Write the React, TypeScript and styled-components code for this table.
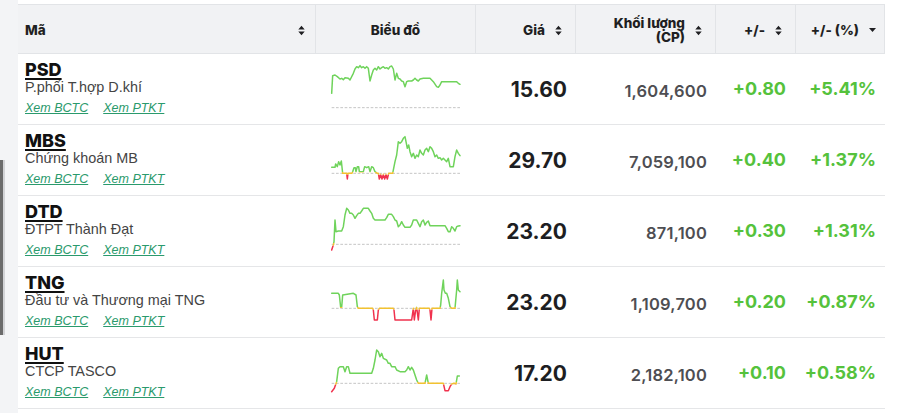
import React from "react";
import styled, { createGlobalStyle } from "styled-components";

const GlobalStyle = createGlobalStyle`
  html, body { margin: 0; padding: 0; background: #ffffff; }
  body { font-family: Inter, "Liberation Sans", Arial, sans-serif; }
  * { box-sizing: border-box; }
`;

const COLS = "298px 160px 100px 140px 80px 89px";

const Page = styled.div`
  display: flex;
  width: 900px;
  height: 413px;
  overflow: hidden;
  background: #ffffff;
`;

const Gutter = styled.div`
  width: 18px;
  flex: none;
  background: #f3f4f6;
  display: flex;
  flex-direction: column;
`;

const Thumb = styled.div`
  margin-top: 160px;
  width: 3px;
  height: 175px;
  background: #6b6b6b;
  box-shadow: 2px 0 0 #d2d3d6;
`;

const Table = styled.div`
  width: 867px;
  padding-top: 4px;
  display: flex;
  flex-direction: column;
`;

const HeaderRow = styled.div`
  display: grid;
  grid-template-columns: ${COLS};
  height: 50px;
  background: #f1f2f4;
  border-top: 1px solid #e2e4e7;
  border-bottom: 1px solid #e2e4e7;
`;

const HeadCell = styled.div<{ $justify: string; $padRight: number }>`
  display: flex;
  align-items: center;
  justify-content: ${(p) => p.$justify};
  gap: 10px;
  padding: 2px ${(p) => p.$padRight}px 0 7px;
  border-right: 1px solid #e2e4e7;
  font-family: Inter, "Liberation Sans", sans-serif;
  font-weight: 800;
  font-size: 13.5px;
  line-height: 14px;
  color: #1f1f22;
`;

const HeadLabel = styled.span<{ $twoLine?: boolean }>`
  flex: none;
  text-align: right;
  line-height: ${(p) => (p.$twoLine ? "14.5px" : "14px")};
`;

const LeftLabel = styled.span`
  flex: 1;
  text-align: left;
`;

const Row = styled.div`
  display: grid;
  grid-template-columns: ${COLS};
  height: 71px;
  border-bottom: 1px solid #e5e6e8;
`;

const InfoCell = styled.div`
  display: flex;
  flex-direction: column;
  align-items: flex-start;
  padding: 7px 0 0 7px;
`;

const Ticker = styled.a`
  font-family: Inter, "Liberation Sans", sans-serif;
  font-weight: 800;
  font-size: 18px;
  line-height: 18px;
  color: #111111;
  text-decoration: underline;
  text-decoration-thickness: 2px;
  text-underline-offset: 2px;
`;

const CompanyName = styled.div`
  font-family: "Liberation Sans", Arial, sans-serif;
  font-size: 14.4px;
  line-height: 16px;
  color: #444444;
`;

const Links = styled.div`
  display: flex;
  gap: 15px;
  margin-top: 4px;
`;

const ReportLink = styled.a`
  font-family: "Liberation Sans", Arial, sans-serif;
  font-style: italic;
  font-size: 12.5px;
  line-height: 18px;
  color: #2a9a6c;
  text-decoration: underline;
`;

const ChartCell = styled.div`
  display: flex;
  align-items: stretch;
  padding-left: 4px;
`;

const ValueCell = styled.div<{ $padRight: number; $padTop?: number }>`
  display: flex;
  align-items: center;
  justify-content: flex-end;
  padding-right: ${(p) => p.$padRight}px;
  padding-top: ${(p) => p.$padTop ?? 0}px;
`;

const Price = styled.span`
  font-family: Inter, sans-serif;
  font-weight: 700;
  font-size: 21px;
  line-height: 21px;
  color: #1d1e22;
`;

const Volume = styled.span`
  font-family: Inter, sans-serif;
  font-weight: 600;
  font-size: 16.5px;
  line-height: 16px;
  letter-spacing: 0.2px;
  color: #4e4e52;
`;

const Change = styled.span`
  font-family: Inter, sans-serif;
  font-weight: 700;
  font-size: 18px;
  line-height: 18px;
  color: #55c23c;
`;

const SortIcon = () => (
  <svg width="7" height="11" viewBox="0 0 7 11" aria-hidden="true">
    <path d="M0.3 4.6 L3.5 0.8 L6.7 4.6 Z M0.3 6.4 L3.5 10.2 L6.7 6.4 Z" fill="#1f1f22" />
  </svg>
);

const CaretIcon = () => (
  <svg width="7" height="4" viewBox="0 0 7 4" aria-hidden="true">
    <path d="M0 0 L7 0 L3.5 4 Z" fill="#1f1f22" />
  </svg>
);

type Pt = [number, number];

const Spark = ({ id, pts, base }: { id: string; pts: Pt[]; base: number }) => {
  const points = pts.map((p) => `${p[0]},${p[1]}`).join(" ");
  const lineProps = {
    points,
    fill: "none",
    strokeWidth: 4.5,
    strokeLinejoin: "round" as const,
    strokeLinecap: "round" as const,
  };
  return (
    <svg width="150" height="70" viewBox="0 0 450 210" aria-hidden="true">
      <defs>
        <clipPath id={`${id}-g`}>
          <rect x="0" y="0" width="450" height={base - 4} />
        </clipPath>
        <clipPath id={`${id}-y`}>
          <rect x="0" y={base - 4} width="450" height="8" />
        </clipPath>
        <clipPath id={`${id}-r`}>
          <rect x="0" y={base + 4} width="450" height={210 - base} />
        </clipPath>
      </defs>
      <line x1="35" y1={base} x2="420" y2={base} stroke="#b9b9b9" strokeWidth="2.5" strokeDasharray="8 5" />
      <polyline {...lineProps} stroke="#6fd35b" clipPath={`url(#${id}-g)`} />
      <polyline {...lineProps} stroke="#f2c230" clipPath={`url(#${id}-y)`} />
      <polyline {...lineProps} stroke="#f0324e" clipPath={`url(#${id}-r)`} />
    </svg>
  );
};

const shift = (pts: Pt[], dx: number, dy: number): Pt[] => pts.map(([x, y]) => [x + dx, y + dy]);

const PSD: Pt[] = shift(
  [
    [35, 115], [38, 62], [45, 60], [52, 65], [60, 72], [65, 70], [70, 74], [75, 68], [85, 70], [90, 75],
    [100, 55], [105, 42], [110, 35], [115, 38], [120, 32], [125, 38], [130, 35], [135, 40], [140, 35],
    [145, 40], [150, 78], [155, 60], [160, 45], [165, 40], [170, 45], [175, 35], [180, 42], [185, 38],
    [190, 35], [195, 40], [200, 38], [205, 42], [210, 35], [215, 33], [220, 42], [225, 75], [230, 55],
    [235, 70], [240, 72], [245, 78], [250, 80], [255, 95], [260, 80], [265, 78], [275, 78], [280, 75],
    [285, 70], [290, 75], [295, 78], [300, 72], [310, 70], [330, 70], [340, 80], [350, 95], [355, 97],
    [360, 90], [365, 80], [380, 80], [410, 80], [415, 85], [420, 88],
  ],
  0,
  3
);

const MBS: Pt[] = [
  [35, 127], [45, 127], [47, 117], [52, 125], [56, 110], [60, 120], [64, 108], [68, 145], [78, 145],
  [80, 145], [82, 162], [84, 145], [96, 145], [98, 140], [102, 128], [106, 128], [108, 140], [112, 125],
  [116, 125], [118, 140], [130, 140], [134, 125], [140, 128], [146, 125], [150, 140], [155, 125],
  [160, 128], [165, 140], [172, 145], [175, 145], [178, 162], [182, 148], [186, 162], [190, 148],
  [194, 162], [198, 148], [202, 162], [206, 145], [218, 145], [225, 110], [230, 90], [235, 50], [240, 55],
  [245, 50], [250, 40], [255, 35], [258, 50], [262, 70], [266, 60], [270, 80], [275, 95], [280, 85],
  [285, 100], [290, 90], [295, 95], [300, 75], [305, 85], [310, 90], [315, 75], [320, 70], [325, 80],
  [330, 65], [335, 70], [340, 80], [345, 95], [350, 90], [355, 100], [360, 98], [365, 105], [370, 100],
  [375, 105], [380, 110], [385, 100], [390, 125], [400, 125], [405, 95], [410, 75], [415, 85], [420, 92],
];

const DTD: Pt[] = shift(
  [
    [35, 165], [40, 150], [42, 140], [45, 75], [48, 110], [55, 108], [65, 108], [70, 95], [75, 60], [80, 40],
    [85, 45], [90, 55], [95, 55], [100, 60], [105, 70], [110, 62], [115, 55], [120, 55], [125, 48], [130, 40],
    [145, 40], [150, 48], [155, 55], [160, 70], [165, 75], [195, 75], [200, 68], [205, 58], [215, 58],
    [220, 65], [225, 75], [230, 78], [235, 95], [240, 90], [245, 80], [250, 90], [255, 97], [270, 97],
    [275, 90], [280, 75], [290, 75], [295, 85], [300, 95], [305, 80], [310, 75], [315, 90], [320, 82],
    [325, 78], [330, 92], [375, 92], [380, 100], [385, 110], [390, 110], [395, 95], [400, 100], [405, 108],
    [410, 95], [415, 93], [420, 92],
  ],
  0,
  -3
);

const TNG: Pt[] = shift(
  [
    [35, 70], [55, 70], [58, 75], [62, 112], [65, 112], [68, 75], [100, 70], [108, 75], [112, 110],
    [115, 115], [158, 115], [160, 120], [163, 150], [172, 150], [175, 120], [178, 115], [220, 115],
    [222, 120], [225, 150], [275, 150], [280, 115], [283, 150], [287, 120], [290, 112], [295, 150],
    [298, 115], [328, 115], [330, 120], [333, 150], [336, 115], [360, 115], [362, 105], [365, 70],
    [370, 30], [372, 60], [376, 70], [380, 70], [385, 85], [390, 110], [395, 115], [405, 115], [410, 60],
    [412, 30], [415, 60], [420, 65],
  ],
  0,
  9
);

const HUT: Pt[] = shift(
  [
    [995, 395], [1003, 385], [1010, 365], [1015, 325], [1020, 320], [1030, 320], [1035, 335], [1040, 320],
    [1045, 320], [1050, 340], [1115, 340], [1120, 325], [1125, 300], [1130, 270], [1135, 275], [1140, 290],
    [1145, 280], [1150, 295], [1160, 300], [1165, 310], [1170, 310], [1175, 320], [1185, 320], [1190, 330],
    [1200, 335], [1215, 335], [1220, 330], [1225, 320], [1230, 330], [1235, 322], [1240, 330], [1245, 345],
    [1250, 360], [1255, 370], [1275, 370], [1280, 345], [1285, 370], [1330, 370], [1335, 392], [1345, 392],
    [1350, 380], [1355, 372], [1362, 370], [1368, 372], [1372, 348], [1378, 348],
  ],
  -960,
  -234
);

const rows = [
  { t: "PSD", name: "P.phối T.hợp D.khí", price: "15.60", vol: "1,604,600", ch: "+0.80", pct: "+5.41%", pts: PSD, base: 161 },
  { t: "MBS", name: "Chứng khoán MB", price: "29.70", vol: "7,059,100", ch: "+0.40", pct: "+1.37%", pts: MBS, base: 145 },
  { t: "DTD", name: "ĐTPT Thành Đạt", price: "23.20", vol: "871,100", ch: "+0.30", pct: "+1.31%", pts: DTD, base: 145 },
  { t: "TNG", name: "Đầu tư và Thương mại TNG", price: "23.20", vol: "1,109,700", ch: "+0.20", pct: "+0.87%", pts: TNG, base: 124 },
  { t: "HUT", name: "CTCP TASCO", price: "17.20", vol: "2,182,100", ch: "+0.10", pct: "+0.58%", pts: HUT, base: 136 },
];

export default function App() {
  return (
    <>
      <GlobalStyle />
      <Page>
        <Gutter>
          <Thumb />
        </Gutter>
        <Table>
          <HeaderRow>
            <HeadCell $justify="flex-start" $padRight={10}>
              <LeftLabel>Mã</LeftLabel>
              <SortIcon />
            </HeadCell>
            <HeadCell $justify="center" $padRight={7}>
              <HeadLabel>Biểu đồ</HeadLabel>
            </HeadCell>
            <HeadCell $justify="flex-end" $padRight={13}>
              <HeadLabel>Giá</HeadLabel>
              <SortIcon />
            </HeadCell>
            <HeadCell $justify="flex-end" $padRight={13}>
              <HeadLabel $twoLine>
                Khối lượng
                <br />
                (CP)
              </HeadLabel>
              <SortIcon />
            </HeadCell>
            <HeadCell $justify="flex-end" $padRight={13}>
              <HeadLabel>+/-</HeadLabel>
              <SortIcon />
            </HeadCell>
            <HeadCell $justify="flex-end" $padRight={8}>
              <HeadLabel>+/- (%)</HeadLabel>
              <CaretIcon />
            </HeadCell>
          </HeaderRow>
          {rows.map((r, i) => (
            <Row key={r.t}>
              <InfoCell>
                <Ticker>{r.t}</Ticker>
                <CompanyName>{r.name}</CompanyName>
                <Links>
                  <ReportLink>Xem BCTC</ReportLink>
                  <ReportLink>Xem PTKT</ReportLink>
                </Links>
              </InfoCell>
              <ChartCell>
                <Spark id={`c${i}`} pts={r.pts} base={r.base} />
              </ChartCell>
              <ValueCell $padRight={9}>
                <Price>{r.price}</Price>
              </ValueCell>
              <ValueCell $padRight={9} $padTop={4}>
                <Volume>{r.vol}</Volume>
              </ValueCell>
              <ValueCell $padRight={10}>
                <Change>{r.ch}</Change>
              </ValueCell>
              <ValueCell $padRight={9}>
                <Change>{r.pct}</Change>
              </ValueCell>
            </Row>
          ))}
        </Table>
      </Page>
    </>
  );
}
